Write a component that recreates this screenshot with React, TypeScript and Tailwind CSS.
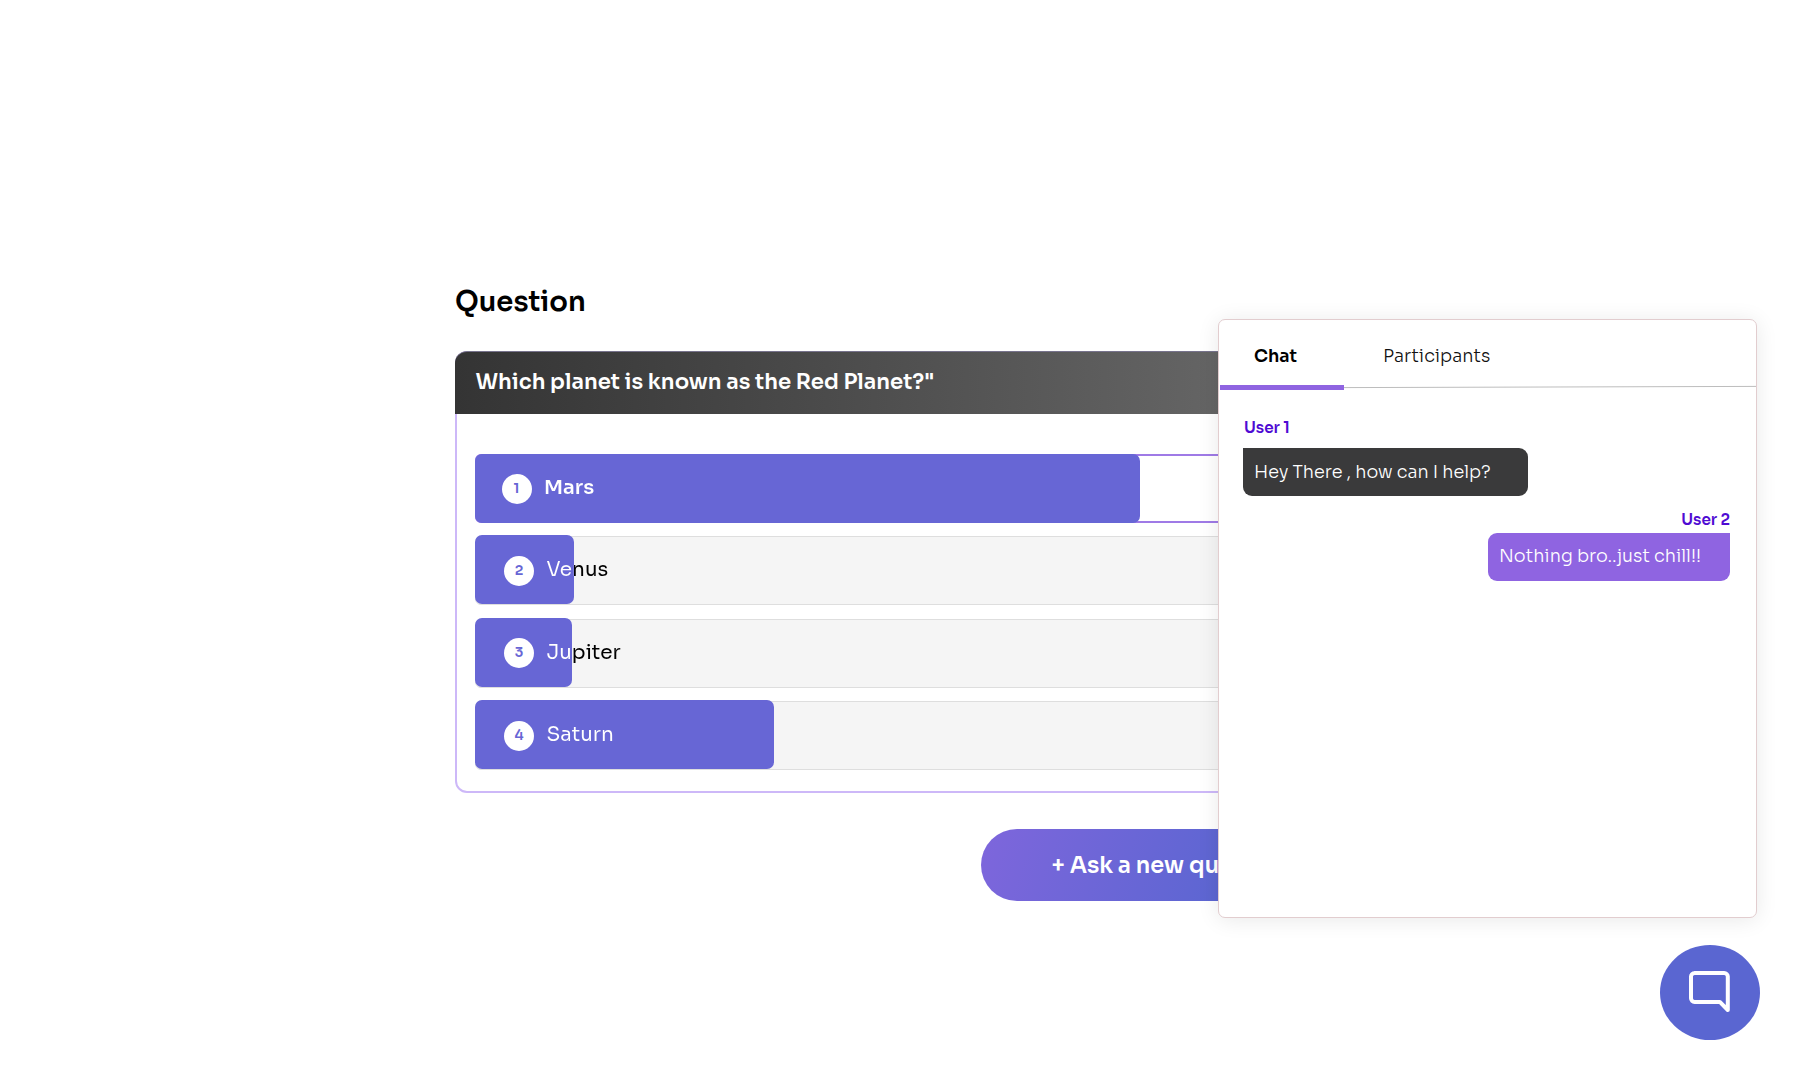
type Option = {
  id: number;
  label: string;
  fill: number;
  textFill: number;
  top: string;
  track: string;
  content: string;
  text: string;
};

const options: Option[] = [
  {
    id: 1,
    label: "Mars",
    fill: 665,
    textFill: 200,
    top: "mt-[40px] h-[69px]",
    track: "top-0 h-[69px] border-2 border-[#9f7ae6] bg-white",
    content: "pl-[26.5px]",
    text: "font-semibold ml-[12.5px] -mt-[2px]",
  },
  {
    id: 2,
    label: "Venus",
    fill: 99,
    textFill: 26.5,
    top: "mt-[12px] h-[69px]",
    track: "top-[1px] h-[69px] border border-[#dedede] bg-[#f5f5f5]",
    content: "pl-[29px] pt-[2px]",
    text: "ml-[12.5px] -mt-[1px]",
  },
  {
    id: 3,
    label: "Jupiter",
    fill: 96.5,
    textFill: 24.5,
    top: "mt-[13.5px] h-[69px]",
    track: "top-[1.5px] h-[69px] border border-[#dedede] bg-[#f5f5f5]",
    content: "pl-[29px] pt-[2px]",
    text: "ml-[12.5px] -mt-[1px]",
  },
  {
    id: 4,
    label: "Saturn",
    fill: 299,
    textFill: 200,
    top: "mt-[13.5px] h-[69px]",
    track: "top-[1px] h-[69px] border border-[#dedede] bg-[#f5f5f5]",
    content: "pl-[29px] pt-[2px]",
    text: "ml-[12.5px] -mt-[2px]",
  },
];

function PollOption({ option }: { option: Option }) {
  return (
    <li className={`relative w-[863px] ${option.top}`}>
      <div className={`absolute left-0 w-full rounded-[6px] ${option.track}`} />
      <div
        className="absolute top-0 left-0 h-full rounded-[7px] bg-[#6766d5]"
        style={{ width: option.fill }}
      />
      <div className={`relative flex h-full items-center ${option.content}`}>
        <span className="flex size-[30px] items-center justify-center rounded-full bg-white pt-[1px] text-[13.7px] font-semibold text-[#6766d5]">
          {option.id}
        </span>
        <span
          className={`bg-clip-text text-[20px] leading-[26px] text-transparent ${option.text}`}
          style={{
            backgroundImage: `linear-gradient(90deg, #fff ${option.textFill}px, #000 ${option.textFill}px)`,
          }}
        >
          {option.label}
        </span>
      </div>
    </li>
  );
}

function ChatPanel() {
  return (
    <aside className="absolute top-[319px] left-[1218px] h-[598.5px] w-[538.5px] rounded-[7px] border border-[#e2cdcf] bg-white shadow-[0_2px_22px_rgba(0,0,0,0.09)]">
      <div className="relative flex h-[70px] pl-[1px]">
        <svg
          className="absolute top-[64px] left-[125px] h-[6px] w-[412px]"
          viewBox="0 0 412 6"
          fill="none"
        >
          <path d="M0 3.6L412 2.4" stroke="#bdbdbd" />
        </svg>
        <button className="flex h-[70px] w-[124px] border-b-[5px] border-[#8f64e1] pt-[26px] pl-[34px] text-[17.5px] leading-[21px] font-semibold text-black">
          Chat
        </button>
        <button className="flex pt-[26px] pl-[39px] text-[17.7px] leading-[21px] font-[350] text-[#111111]">
          Participants
        </button>
      </div>
      <div className="flex flex-col pt-[29px] pr-[25.5px] pl-[24px]">
        <span className="pl-[1px] text-[15.2px] leading-[18px] font-semibold text-[#4f0bd3]">
          User 1
        </span>
        <div className="mt-[11px] flex h-[47.5px] w-[285px] items-center rounded-[9px] rounded-tl-none bg-[#3a3a3b] pl-[11px] text-[17.65px] font-[350] text-white">
          Hey There , how can I help?
        </div>
        <span className="mt-[15px] self-end text-[15.2px] leading-[18px] font-semibold text-[#4f0bd3]">
          User 2
        </span>
        <div className="mt-[4px] flex h-[48.5px] w-[242px] items-center self-end rounded-[9px] rounded-tr-none bg-[#8f64e1] pl-[11px] text-[17.7px] font-[350] text-white">
          Nothing bro..just chill!!
        </div>
      </div>
    </aside>
  );
}

export default function App() {
  return (
    <div className="relative h-[1079px] w-[1797px] overflow-hidden bg-white pt-[284px] pl-[455px] font-['Sora','Inter',sans-serif]">
      <main className="flex w-[903px] flex-col">
        <h1 className="text-[27.5px] leading-[36px] font-semibold text-black">
          Question
        </h1>
        <section className="mt-[31px] h-[442px] rounded-[12px] border-2 border-[#cdb8f8] bg-white">
          <header className="-mx-[2px] -mt-[2px] flex h-[63px] items-center rounded-t-[12px] border-t border-[#77738c] bg-linear-to-r from-[#343434] to-[#6e6e6e] pb-[3px] pl-[20.5px] text-[21.25px] font-semibold text-white">
            Which planet is known as the Red Planet?"
          </header>
          <ul className="pl-[18px]">
            {options.map((option) => (
              <PollOption key={option.id} option={option} />
            ))}
          </ul>
        </section>
        <button className="mt-[36px] h-[72px] w-[377px] self-end rounded-full bg-[linear-gradient(110deg,#7e66dc_0%,#5a66d1_70%,#4f60c8_100%)] pt-[2px] pl-[70.5px] text-left text-[22.4px] font-semibold whitespace-nowrap text-white">
          + Ask a new question
        </button>
      </main>
      <ChatPanel />
      <button
        aria-label="Open chat"
        className="absolute top-[945px] left-[1660px] h-[95px] w-[100px] rounded-[50%] bg-[#5a66d1]"
      >
        <svg
          className="absolute top-[26px] left-[29px] h-[41px] w-[41px]"
          viewBox="0 0 41 41"
          fill="none"
          stroke="white"
          strokeWidth="4"
          strokeLinejoin="round"
        >
          <path d="M5.5 2H35.2A3.6 3.6 0 0 1 38.8 5.6V39L30.8 30.9H5.6A3.6 3.6 0 0 1 2 27.3V5.6A3.6 3.6 0 0 1 5.6 2Z" />
        </svg>
      </button>
    </div>
  );
}
